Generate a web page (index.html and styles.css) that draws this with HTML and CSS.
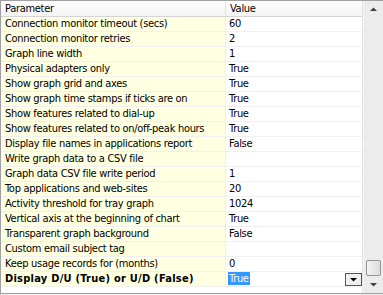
FILE: index.html
```html
<!DOCTYPE html>
<html>
<head>
<meta charset="utf-8">
<link rel="stylesheet" href="styles.css">
</head>
<body>
<div class="window">
  <div class="grid">
    <div class="table">
      <div class="row head">
        <div class="cell pname">Parameter</div>
        <div class="cell pval">Value</div>
      </div>
      <div class="row"><div class="cell pname">Connection monitor timeout (secs)</div><div class="cell pval">60</div></div>
      <div class="row"><div class="cell pname">Connection monitor retries</div><div class="cell pval">2</div></div>
      <div class="row"><div class="cell pname">Graph line width</div><div class="cell pval">1</div></div>
      <div class="row"><div class="cell pname">Physical adapters only</div><div class="cell pval">True</div></div>
      <div class="row"><div class="cell pname">Show graph grid and axes</div><div class="cell pval">True</div></div>
      <div class="row"><div class="cell pname">Show graph time stamps if ticks are on</div><div class="cell pval">True</div></div>
      <div class="row"><div class="cell pname">Show features related to dial-up</div><div class="cell pval">True</div></div>
      <div class="row"><div class="cell pname">Show features related to on/off-peak hours</div><div class="cell pval">True</div></div>
      <div class="row"><div class="cell pname">Display file names in applications report</div><div class="cell pval">False</div></div>
      <div class="row"><div class="cell pname">Write graph data to a CSV file</div><div class="cell pval"></div></div>
      <div class="row"><div class="cell pname">Graph data CSV file write period</div><div class="cell pval">1</div></div>
      <div class="row"><div class="cell pname">Top applications and web-sites</div><div class="cell pval">20</div></div>
      <div class="row"><div class="cell pname">Activity threshold for tray graph</div><div class="cell pval">1024</div></div>
      <div class="row"><div class="cell pname">Vertical axis at the beginning of chart</div><div class="cell pval">True</div></div>
      <div class="row"><div class="cell pname">Transparent graph background</div><div class="cell pval">False</div></div>
      <div class="row"><div class="cell pname">Custom email subject tag</div><div class="cell pval"></div></div>
      <div class="row"><div class="cell pname">Keep usage records for (months)</div><div class="cell pval">0</div></div>
      <div class="row current"><div class="cell pname">Display D/U (True) or U/D (False)</div><div class="cell pval"><span class="sel">True</span><span class="drop"><svg width="9" height="5" viewBox="0 0 9 5"><path d="M1 1h7L4.5 4.5z" fill="#000"/></svg></span></div></div>
    </div>
    <div class="scrollbar">
      <div class="arrow up"><svg width="9" height="5" viewBox="0 0 9 5"><path d="M4.5 0.5L8 4H1z" fill="#404040"/></svg></div>
      <div class="track"><div class="thumb"></div></div>
      <div class="arrow down"><svg width="9" height="5" viewBox="0 0 9 5"><path d="M1 1h7L4.5 4.5z" fill="#404040"/></svg></div>
    </div>
  </div>
</div>
</body>
</html>
```
FILE: styles.css
```css
html, body {
  margin: 0;
  padding: 0;
}
body {
  width: 383px;
  height: 295px;
  background: #f0f0f0;
  font-family: "DejaVu Sans Condensed", "DejaVu Sans", sans-serif;
  font-size: 11px;
  letter-spacing: -0.3px;
  color: #000;
  overflow: hidden;
}
.window {
  width: 383px;
  height: 295px;
  box-sizing: border-box;
  border-left: 1px solid #a0a0a0;
  border-top: 1px solid #a0a0a0;
  border-bottom: 1px solid #f0f0f0;
  background: #f0f0f0;
}
.grid {
  display: flex;
  height: 292px;
  background: #fff;
  border-bottom: 1px solid #a0a0a0;
}
.table {
  width: 363px;
  display: flex;
  flex-direction: column;
  border-right: 1px solid #e3e3e3;
}
.row {
  display: flex;
  height: 15px;
  flex: none;
  box-sizing: border-box;
  border-bottom: 1px solid #f0f0f0;
}
.cell {
  line-height: 14px;
  white-space: nowrap;
  overflow: hidden;
  box-sizing: border-box;
}
.pname {
  width: 225px;
  padding-left: 4px;
  background: #ffffe1;
  border-right: 1px solid #f0f0f0;
}
.pval {
  flex: 1;
  padding-left: 3px;
  position: relative;
}
.head {
  height: 16px;
  background: linear-gradient(#ffffff, #f3f3f3);
  border-bottom: 1px solid #d5d5d5;
}
.head .cell {
  line-height: 15px;
}
.head .pname {
  background: transparent;
  border-right: 1px solid #e3e3e3;
}
.head .pval {
  padding-left: 4px;
}
.current .pname {
  font-weight: bold;
  letter-spacing: 0.25px;
}
.sel {
  background: #3399ff;
  color: #fff;
  display: inline-block;
  padding: 0 1px;
  margin-left: -1px;
  line-height: 13px;
}
.drop {
  position: absolute;
  right: 0;
  top: 1px;
  width: 17px;
  height: 13px;
  box-sizing: border-box;
  border: 1px solid #555;
  background: #f0f0f0;
  display: flex;
  align-items: center;
  justify-content: center;
}
.scrollbar {
  width: 19px;
  display: flex;
  flex-direction: column;
  background: #ececec;
  border-left: 1px solid #f4f4f4;
}
.arrow {
  height: 17px;
  display: flex;
  align-items: center;
  justify-content: center;
}
.track {
  flex: 1;
  display: flex;
  flex-direction: column;
  justify-content: flex-end;
  align-items: center;
}
.thumb {
  width: 15px;
  height: 16px;
  box-sizing: border-box;
  border: 1px solid #959595;
  border-radius: 2px;
  background: linear-gradient(90deg, #f4f4f4, #dcdcdc);
}
```
